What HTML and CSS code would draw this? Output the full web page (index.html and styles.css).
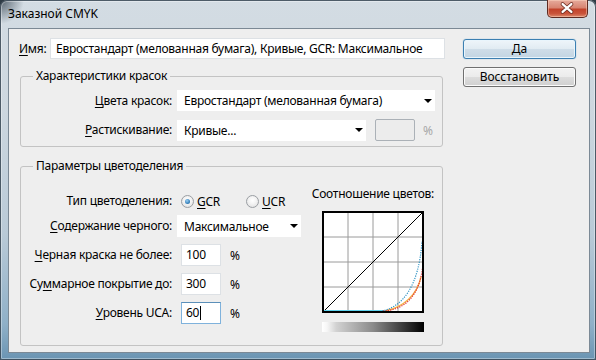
FILE: index.html
```html
<!DOCTYPE html>
<html>
<head>
    <meta charset="utf-8">
    <title>Заказной CMYK</title>
    <link rel="stylesheet" href="styles.css">
</head>
<body>

<div class="window">
    <div class="titlebar">
        <span class="title">Заказной CMYK</span>
        <span class="close">
            <svg width="41" height="18" viewBox="0 0 41 18">
                <path d="M16 5 L25 13 M25 5 L16 13" stroke="#6b2a1e" stroke-width="4" stroke-linecap="round"/>
                <path d="M16 5 L25 13 M25 5 L16 13" stroke="#ffffff" stroke-width="2.4" stroke-linecap="round"/>
            </svg>
        </span>
    </div>

    <div class="client">
        <div class="main">
            <div class="name-row">
                <span class="name-label"><u>И</u>мя:</span>
                <div class="field name-field">Евростандарт (мелованная бумага), Кривые, GCR: Максимальное</div>
            </div>

            <fieldset class="group group-inks">
                <legend>Характеристики красок</legend>
                <div class="form-grid inks-grid">
                    <span class="label"><u>Ц</u>вета красок:</span>
                    <div class="select select-wide">Евростандарт (мелованная бумага)<i class="arrow"></i></div>

                    <span class="label"><u>Р</u>астискивание:</span>
                    <div class="inline">
                        <div class="select select-mid">Кривые...<i class="arrow"></i></div>
                        <div class="field field-disabled"></div>
                        <span class="pct pct-disabled">%</span>
                    </div>
                </div>
            </fieldset>

            <fieldset class="group group-sep">
                <legend>Параметры цветоделения</legend>
                <div class="sep-body">
                    <div class="form-grid sep-grid">
                        <span class="label">Тип цветоделения:</span>
                        <div class="inline radios">
                            <span class="radio checked"></span><span class="radio-text"><u>G</u>CR</span>
                            <span class="radio"></span><span class="radio-text"><u>U</u>CR</span>
                        </div>

                        <span class="label"><u>С</u>одержание черного:</span>
                        <div class="select select-short">Максимальное<i class="arrow"></i></div>

                        <span class="label"><u>Ч</u>ерная краска не более:</span>
                        <div class="inline">
                            <div class="field num">100</div>
                            <span class="pct">%</span>
                        </div>

                        <span class="label">Су<u>м</u>марное покрытие до:</span>
                        <div class="inline">
                            <div class="field num">300</div>
                            <span class="pct">%</span>
                        </div>

                        <span class="label"><u>У</u>ровень UCA:</span>
                        <div class="inline">
                            <div class="field num focused">60<i class="caret"></i></div>
                            <span class="pct">%</span>
                        </div>
                    </div>

                    <div class="ratio">
                        <div class="ratio-title">Соотношение цветов:</div>
                        <svg class="graph" width="102" height="102" viewBox="0 0 102 102">
                            <rect x="0" y="0" width="102" height="102" fill="#ffffff"/>
                            <path d="M26 1 V101 M51 1 V101 M76 1 V101 M1 26 H101 M1 51 H101 M1 76 H101" stroke="#9a9a9a" stroke-width="1"/>
                            <path d="M1 101 L101 1" stroke="#000" stroke-width="1"/>
                            <path d="M1 100 H62" stroke="#5fd3ee" stroke-width="2"/>
                            <path d="M63 100 C82 96, 95 84, 99 66" fill="none" stroke="#f3b34a" stroke-width="1.3"/>
                            <path d="M61 100 C82 99, 98 86, 101 53" fill="none" stroke="#e4262f" stroke-width="1.2" stroke-dasharray="1.2 1.2"/>
                            <path d="M60 100 C80 96, 97 76, 100 30" fill="none" stroke="#2f93c4" stroke-width="1.2" stroke-dasharray="1.2 1.2"/>
                            <rect x="1" y="1" width="100" height="100" fill="none" stroke="#000" stroke-width="2"/>
                        </svg>
                        <div class="ramp"></div>
                    </div>
                </div>
            </fieldset>
        </div>

        <div class="buttons">
            <div class="btn btn-default">Да</div>
            <div class="btn">Восстановить</div>
        </div>
    </div>
</div>

</body>
</html>
```

FILE: styles.css
```css
* { box-sizing: border-box; }
html, body { margin: 0; padding: 0; }
body { width: 596px; height: 360px; overflow: hidden; background: #2e3b45; font-family: "Noto Sans", "Open Sans", sans-serif; font-size: 12px; letter-spacing: -0.25px; color: #000; }
u { text-decoration: underline; text-underline-offset: 2px; }

/* window frame */
.window { width: 596px; height: 360px; display: flex; flex-direction: column; padding: 0 6px 7px 8px; border-radius: 7px 7px 2px 2px;
    background:
        radial-gradient(circle at 0 0, rgba(40, 55, 68, 0.75) 0, rgba(40, 55, 68, 0) 24px),
        linear-gradient(180deg, #d3dce3 0, #cdd7df 30%, #b9cad7 65%, #8fb0c8 90%, #6a94b2 100%);
    box-shadow: inset 0 0 0 1px rgba(40, 56, 70, 0.8), inset 0 0 0 2px rgba(255, 255, 255, 0.35); }
.titlebar { height: 28px; display: flex; align-items: flex-start; flex-shrink: 0; }
.title { line-height: 28px; font-size: 12px; letter-spacing: 0; color: #000; }
.close { margin-left: auto; margin-right: 2px; width: 41px; height: 18px; border: 1px solid #5e2b22; border-top: none; border-radius: 0 0 5px 5px;
    background: linear-gradient(180deg, #e6ab9c 0, #d88572 45%, #c2432b 55%, #c9543b 80%, #dd8a6d 100%);
    box-shadow: inset 0 0 0 1px rgba(255, 220, 200, 0.45); display: flex; }
.close svg { display: block; margin: -1px 0 0 -1px; }

.client { flex: 1; display: flex; background: #eeeeee; border: 1px solid #7b8995; padding: 9px 12px 0 10px; }
.main { width: 426px; }
.buttons { width: 113px; margin-left: 18px; display: flex; flex-direction: column; gap: 8px; padding-top: 1px; }

/* controls */
.field { height: 21px; line-height: 19px; background: #fff; border: 1px solid #dde1e5; padding: 0 5px; white-space: nowrap; overflow: hidden; }
.name-row { display: flex; align-items: center; height: 21px; }
.name-label { width: 31px; }
.name-field { flex: 1; }

.select { height: 21px; display: flex; align-items: center; background: #fff; padding: 0 3px 0 7px; white-space: nowrap; }
.select .arrow { margin-left: auto; width: 0; height: 0; border-top: 4px solid #000; border-left: 4px solid transparent; border-right: 4px solid transparent; }
.select-wide { width: 258px; }
.select-mid { width: 189px; }
.select-short { width: 124px; height: 22px; }

.field-disabled { width: 40px; height: 22px; margin-left: 9px; background: #ececec; border: 1px solid #abb1b7; border-radius: 2px; }
.pct { margin-left: 9px; }
.pct-disabled { color: #a7a7a7; margin-left: 8px; }

.inline { display: flex; align-items: center; }
.form-grid { display: grid; grid-template-columns: 151px auto; column-gap: 5px; }
.form-grid .label { text-align: right; line-height: 21px; white-space: nowrap; }

/* group boxes */
.group { margin: 9px 0 0 1px; width: 423px; border: 1px solid #c3c3c3; border-radius: 3px; padding: 6px 0 5px 0; min-width: 0; }
.group legend { margin-left: 12px; padding: 0 3px; line-height: 16px; }
.inks-grid { row-gap: 8px; }
.group-sep { margin-top: 11px; padding: 12px 8px 13px 0; }
.sep-body { display: flex; align-items: flex-start; }
.sep-grid { margin-top: 4px; grid-template-rows: 25px 29px 29px 29px 22px; align-items: start; }
.sep-grid .label { line-height: 22px; }

.num { width: 40px; height: 22px; line-height: 20px; margin-left: 4px; padding: 0 4px; display: flex; align-items: center; }
.focused { border-color: #7fb2dc; border-top-color: #5b8fb9; }
.caret { display: inline-block; width: 1px; height: 14px; background: #000; margin-left: 1px; }

.radios { height: 22px; }
.radio { width: 13px; height: 13px; border-radius: 50%; margin-left: 4px; border: 1px solid #9a9ea3;
    background: radial-gradient(circle at 50% 40%, #ffffff 0, #f4f4f4 40%, #dcdcdc 100%); display: flex; align-items: center; justify-content: center; }
.radio.checked::after { content: ""; width: 5px; height: 5px; border-radius: 50%; background: radial-gradient(circle at 40% 35%, #9bd0f3 0, #3a83bd 60%, #215e8f 100%); }
.radio-text { margin-left: 3px; margin-right: 26px; }
.radio + .radio-text + .radio { margin-left: 0; }

.ratio { margin-left: auto; display: flex; flex-direction: column; align-items: center; }
.ratio-title { line-height: 16px; white-space: nowrap; }
.graph { display: block; margin-top: 9px; }
.ramp { width: 102px; height: 10px; margin-top: 9px; background: linear-gradient(90deg, #ffffff 0, #f6f6f6 5%, #d2d2d2 14%, #8a8a8a 50%, #2a2a2a 85%, #000 100%); }

/* buttons */
.btn { height: 20px; line-height: 18px; text-align: center; border: 1px solid #707070; border-radius: 3px; letter-spacing: 0;
    background: linear-gradient(180deg, #f3f3f3 0, #ebebeb 50%, #dddddd 50%, #cfcfcf 100%);
    box-shadow: inset 0 0 0 1px #fbfbfb; }
.btn-default { border-color: #3c7fb1;
    background: linear-gradient(180deg, #eef5fa 0, #e1ebf2 50%, #cfdde8 50%, #c3d5e3 100%);
    box-shadow: inset 0 0 0 1px #e9f5fc, 0 0 1px #5aa0d0; }
```
